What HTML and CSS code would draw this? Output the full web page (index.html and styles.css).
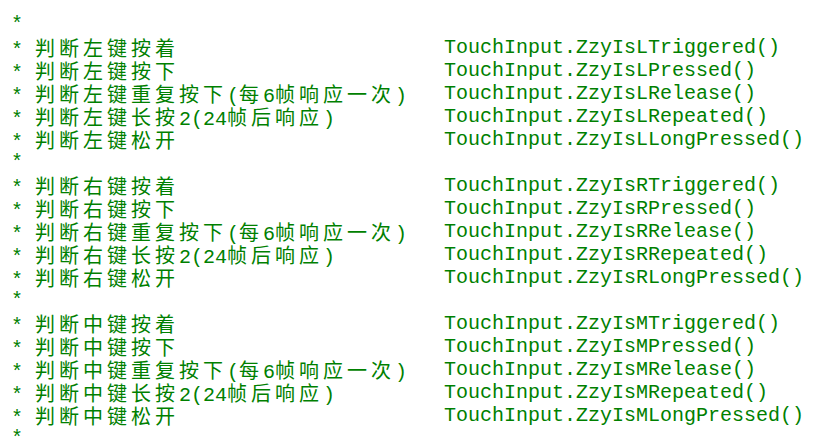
FILE: index.html
```html
<!DOCTYPE html>
<html lang="zh">
<head>
<meta charset="utf-8">
<link rel="stylesheet" href="styles.css">
</head>
<body>
<div class="code">
  <div class="row"><span class="txt">*</span></div>
  <div class="row"><span class="txt">*</span></div>
  <div class="row"><span class="txt">* <span class="c">判断左键按着</span></span><span class="fn">TouchInput.ZzyIsLTriggered()</span></div>
  <div class="row"><span class="txt">* <span class="c">判断左键按下</span></span><span class="fn">TouchInput.ZzyIsLPressed()</span></div>
  <div class="row"><span class="txt">* <span class="c">判断左键重复按下</span>(<span class="c">每</span>6<span class="c">帧响应一次</span>)</span><span class="fn">TouchInput.ZzyIsLRelease()</span></div>
  <div class="row"><span class="txt">* <span class="c">判断左键长按</span>2(24<span class="c">帧后响应</span>)</span><span class="fn">TouchInput.ZzyIsLRepeated()</span></div>
  <div class="row"><span class="txt">* <span class="c">判断左键松开</span></span><span class="fn">TouchInput.ZzyIsLLongPressed()</span></div>
  <div class="row"><span class="txt">*</span></div>
  <div class="row"><span class="txt">* <span class="c">判断右键按着</span></span><span class="fn">TouchInput.ZzyIsRTriggered()</span></div>
  <div class="row"><span class="txt">* <span class="c">判断右键按下</span></span><span class="fn">TouchInput.ZzyIsRPressed()</span></div>
  <div class="row"><span class="txt">* <span class="c">判断右键重复按下</span>(<span class="c">每</span>6<span class="c">帧响应一次</span>)</span><span class="fn">TouchInput.ZzyIsRRelease()</span></div>
  <div class="row"><span class="txt">* <span class="c">判断右键长按</span>2(24<span class="c">帧后响应</span>)</span><span class="fn">TouchInput.ZzyIsRRepeated()</span></div>
  <div class="row"><span class="txt">* <span class="c">判断右键松开</span></span><span class="fn">TouchInput.ZzyIsRLongPressed()</span></div>
  <div class="row"><span class="txt">*</span></div>
  <div class="row"><span class="txt">* <span class="c">判断中键按着</span></span><span class="fn">TouchInput.ZzyIsMTriggered()</span></div>
  <div class="row"><span class="txt">* <span class="c">判断中键按下</span></span><span class="fn">TouchInput.ZzyIsMPressed()</span></div>
  <div class="row"><span class="txt">* <span class="c">判断中键重复按下</span>(<span class="c">每</span>6<span class="c">帧响应一次</span>)</span><span class="fn">TouchInput.ZzyIsMRelease()</span></div>
  <div class="row"><span class="txt">* <span class="c">判断中键长按</span>2(24<span class="c">帧后响应</span>)</span><span class="fn">TouchInput.ZzyIsMRepeated()</span></div>
  <div class="row"><span class="txt">* <span class="c">判断中键松开</span></span><span class="fn">TouchInput.ZzyIsMLongPressed()</span></div>
  <div class="row"><span class="txt">*</span></div>
</div>
</body>
</html>
```

FILE: styles.css
```css
html, body {
  margin: 0;
  padding: 0;
  background: #ffffff;
}
body {
  width: 828px;
  height: 446px;
  overflow: hidden;
}
.code {
  margin-top: -10px;
  padding-left: 11px;
  font-family: "Liberation Mono", "Noto Sans CJK SC", monospace;
  font-size: 20px;
  line-height: 23px;
  color: #008000;
}
.row {
  display: grid;
  grid-template-columns: 433px auto;
  height: 23px;
  white-space: pre;
}
.c {
  font-family: "Noto Sans CJK SC", sans-serif;
  letter-spacing: 4px;
}
.fn {
  white-space: pre;
}
```
